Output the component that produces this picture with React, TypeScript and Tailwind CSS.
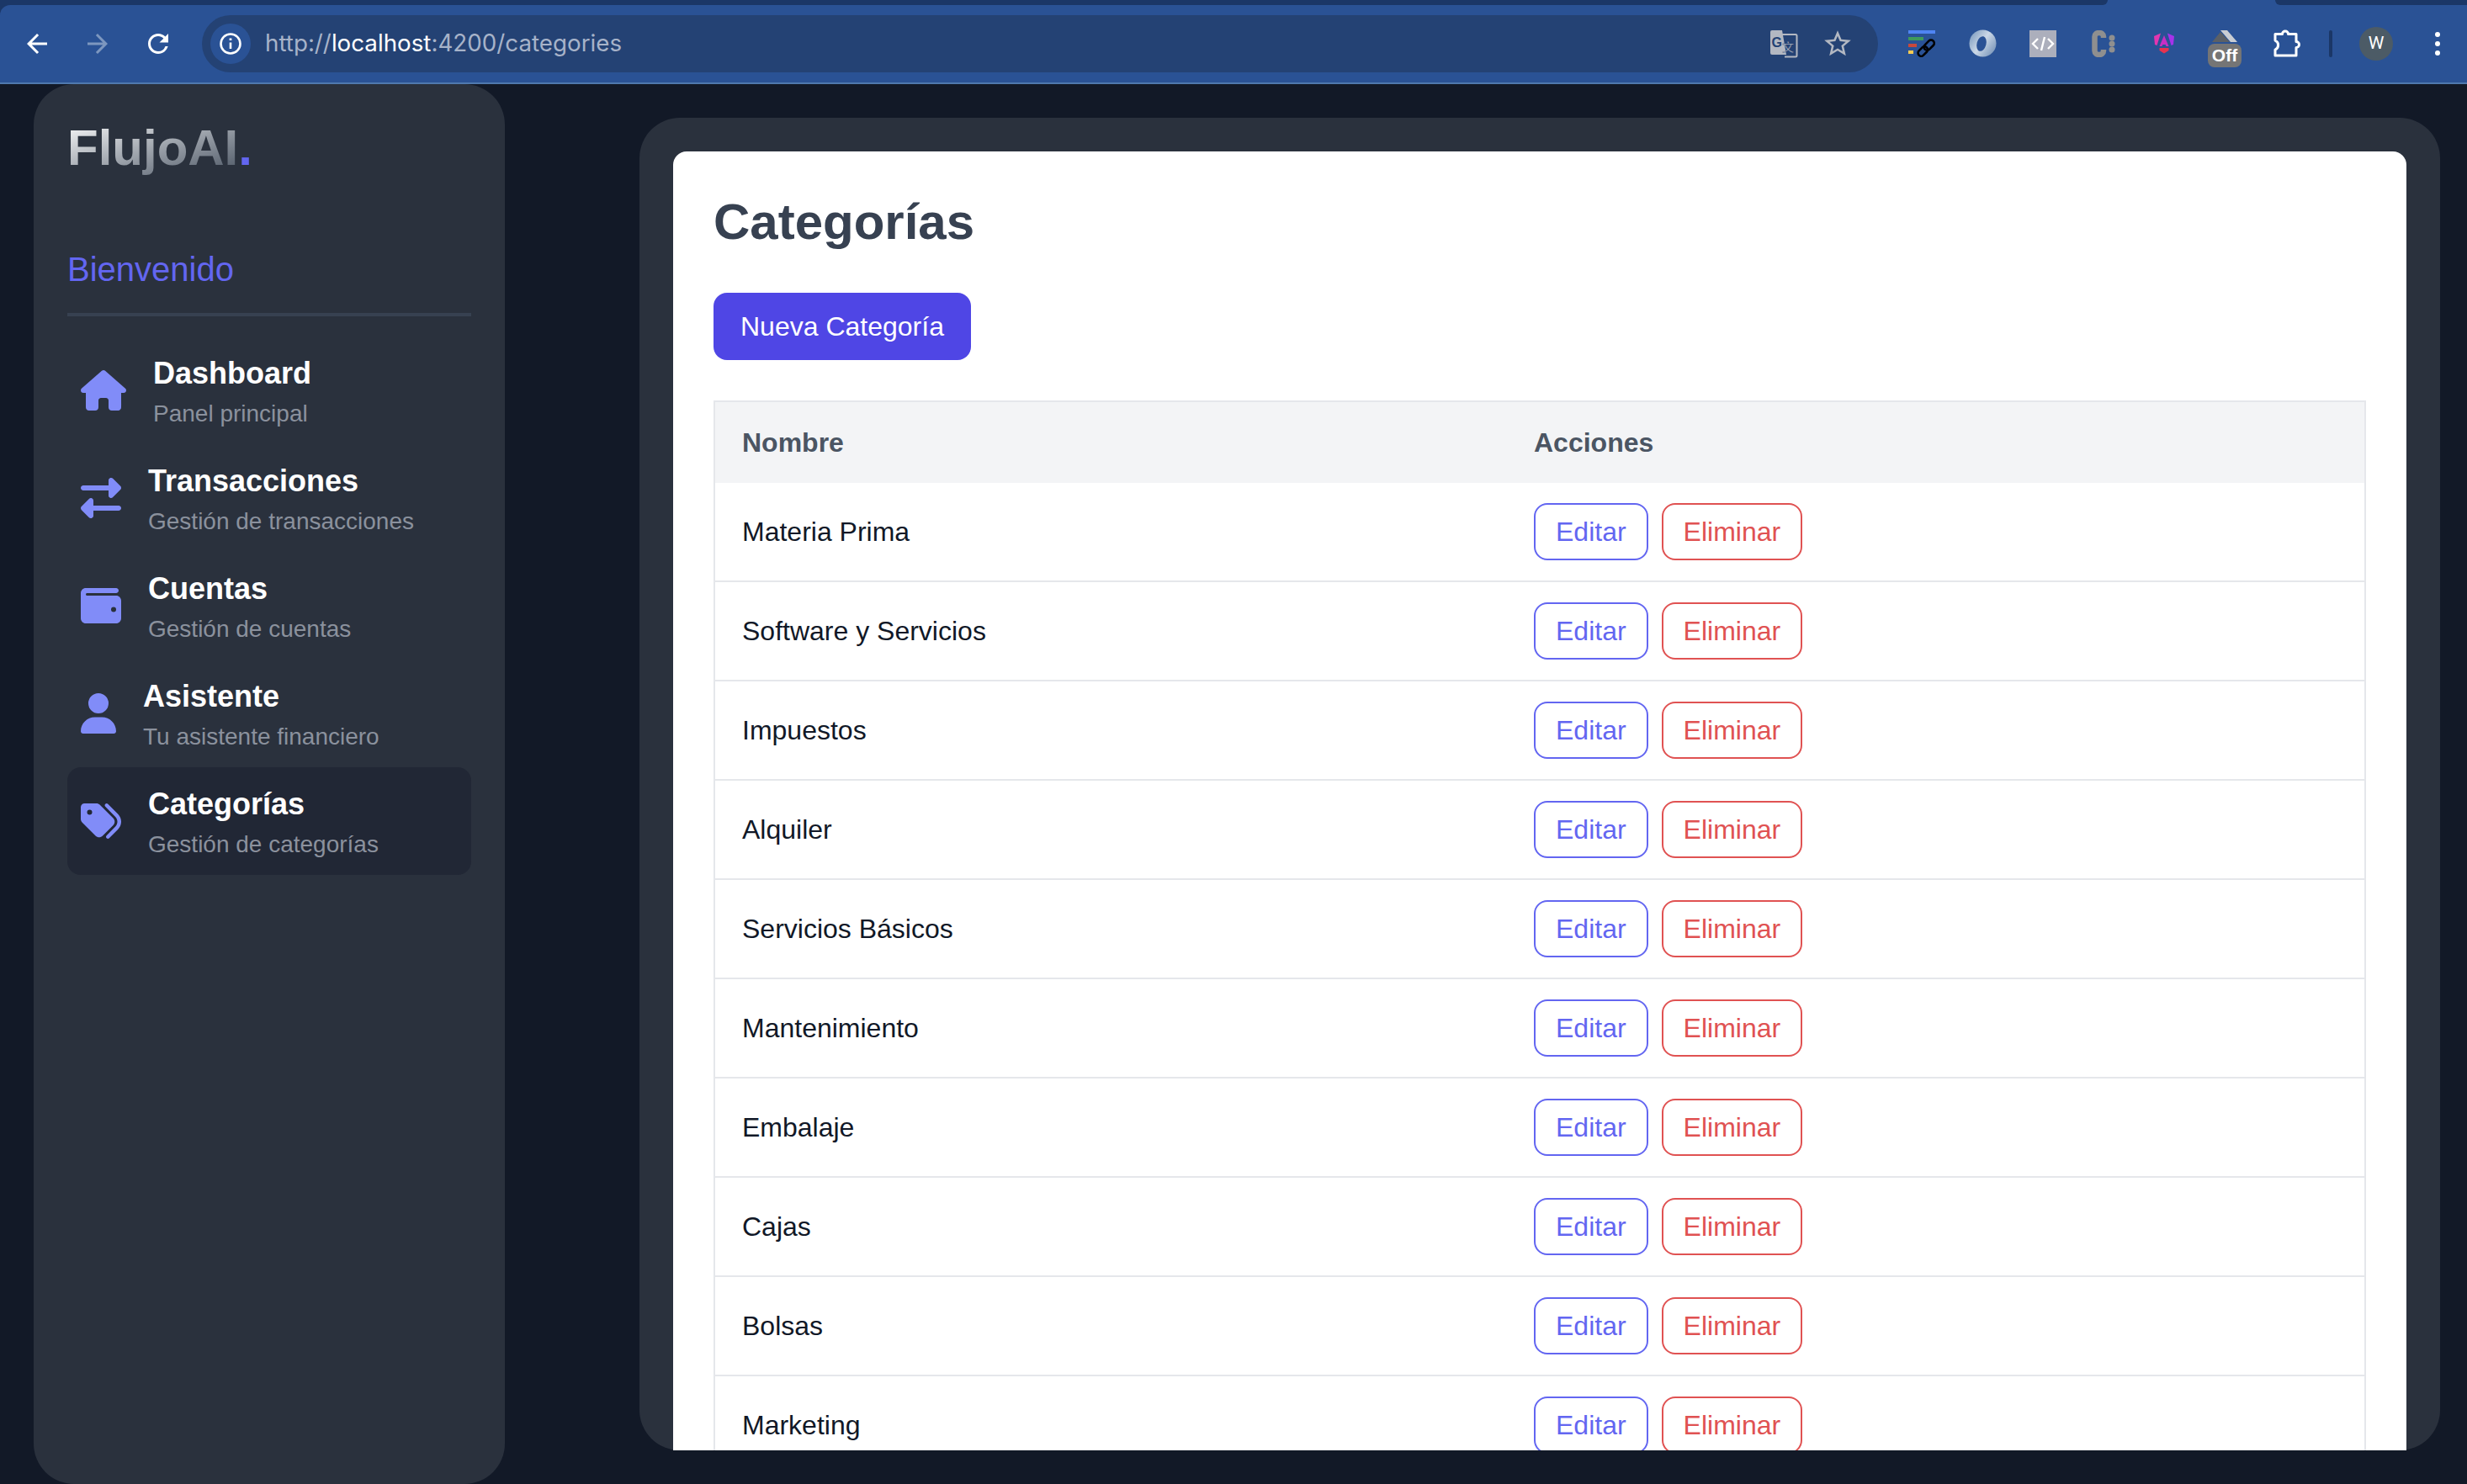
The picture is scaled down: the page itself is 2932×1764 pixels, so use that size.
import { FaHouse, FaRightLeft, FaWallet, FaUser, FaTags } from "react-icons/fa6";

const navItems = [
  { icon: FaHouse, iconSize: "h-[48px] w-[54px]", title: "Dashboard", sub: "Panel principal" },
  { icon: FaRightLeft, iconSize: "h-[48px] w-[48px]", title: "Transacciones", sub: "Gestión de transacciones" },
  { icon: FaWallet, iconSize: "h-[48px] w-[48px]", title: "Cuentas", sub: "Gestión de cuentas" },
  { icon: FaUser, iconSize: "h-[48px] w-[42px]", title: "Asistente", sub: "Tu asistente financiero" },
  { icon: FaTags, iconSize: "h-[48px] w-[48px]", title: "Categorías", sub: "Gestión de categorías", active: true },
];

const categories = [
  "Materia Prima",
  "Software y Servicios",
  "Impuestos",
  "Alquiler",
  "Servicios Básicos",
  "Mantenimiento",
  "Embalaje",
  "Cajas",
  "Bolsas",
  "Marketing",
];

function TranslateIcon() {
  return (
    <svg width="34" height="34" viewBox="0 0 34 34">
      <path d="M15 6h16a1.500 1.500 0 0 1 1.500 1.500V31a1.500 1.500 0 0 1-1.500 1.500H18" fill="#244274" stroke="#b3b8c2" strokeWidth="2" />
      <path d="M3 1h12l5 29H3a2 2 0 0 1-2-2V3a2 2 0 0 1 2-2z" fill="#b3b8c2" />
      <text x="2.500" y="21" fontSize="16" fontWeight="700" fill="#244274" fontFamily="Liberation Sans, sans-serif">G</text>
      <text x="15" y="26" fontSize="14" fill="#b3b8c2" stroke="#244274" strokeWidth="0.3" fontFamily="Noto Sans CJK SC, sans-serif">文</text>
    </svg>
  );
}

function LinkExtIcon() {
  return (
    <svg width="32" height="32" viewBox="0 0 32 32">
      <rect x="0" y="0" width="32" height="4" fill="#4f84f2" />
      <rect x="0" y="8" width="18" height="4" fill="#3f9a5c" />
      <rect x="0" y="16" width="10" height="4" fill="#c8483c" />
      <rect x="0" y="24" width="6" height="4" fill="#f6cb52" />
      <g fill="none" stroke="#000" strokeWidth="2.600" transform="rotate(-45 21 21)">
        <rect x="9" y="17.500" width="13" height="7.500" rx="3.700" />
        <rect x="19" y="17.500" width="14" height="7.500" rx="3.700" />
      </g>
    </svg>
  );
}

function RingIcon() {
  return (
    <svg width="33" height="33" viewBox="0 0 33 33">
      <defs>
        <linearGradient id="ring" x1="0" y1="0.2" x2="1" y2="0.9">
          <stop offset="0" stopColor="#7f9dc0" />
          <stop offset="0.45" stopColor="#cbd8e7" />
          <stop offset="1" stopColor="#6f8db4" />
        </linearGradient>
      </defs>
      <circle cx="16.500" cy="16.500" r="16" fill="url(#ring)" />
      <ellipse cx="15" cy="17" rx="5.500" ry="9" transform="rotate(15 15 17)" fill="#2a5295" />
    </svg>
  );
}

function CodeIcon() {
  return (
    <svg width="32" height="32" viewBox="0 0 32 32">
      <rect width="32" height="32" fill="#acafbc" />
      <path d="M10 10l-6 6 6 6M22 10l6 6-6 6M18 8l-4 16" fill="none" stroke="#fff" strokeWidth="2.400" />
    </svg>
  );
}

function CDotsIcon() {
  return (
    <svg width="28" height="32" viewBox="0 0 28 32">
      <path d="M14 9V7.500C14 1.500 3.500 1.500 3.500 7.500V24.500C3.500 30.500 14 30.500 14 24.500V23" fill="none" stroke="#8f8f8f" strokeWidth="6.500" />
      <circle cx="24" cy="9" r="3.500" fill="#8f8f8f" />
      <circle cx="24" cy="16" r="3.500" fill="#8f8f8f" />
      <circle cx="24" cy="23" r="3.500" fill="#8f8f8f" />
    </svg>
  );
}

function AngularIcon() {
  return (
    <svg width="24" height="25" viewBox="0 0 24 25">
      <path d="M0 4L8 .5 3.500 15 1 14z" fill="#e236b0" />
      <path d="M16 .5L24 4l-1 10-2.500 1z" fill="#a533ea" />
      <path d="M12 3l5.500 13h-3L13.600 14h-3.200l-.9 2h-3z" fill="#c62fc4" />
      <path d="M6.500 18h11v3L12 24.500 6.500 21z" fill="#e8334f" />
    </svg>
  );
}

function OffBadge() {
  return (
    <div className="flex w-[40px] flex-col items-center">
      <svg width="32" height="16" viewBox="0 0 32 16">
        <path d="M1 14L11 2l11 12z" fill="#5b6066" />
        <path d="M11 0h8l12 14h-8z" fill="#c9cdd3" />
      </svg>
      <div className="flex h-[28px] w-[40px] items-center justify-center rounded-[8px] bg-[#757575] font-['Liberation_Sans',sans-serif] text-[21px] leading-none font-bold text-white">
        Off
      </div>
    </div>
  );
}

function PuzzleIcon() {
  return (
    <svg width="34" height="34" viewBox="0 0 34 34">
      <path
        d="M3 5.500H11.500A3.500 3.500 0 0 1 18.500 5.500H28V14.500A3.500 3.500 0 0 1 28 21.500V31H3V24A6 6 0 0 0 3 13Z"
        fill="none"
        stroke="#fff"
        strokeWidth="3"
        strokeLinejoin="round"
      />
    </svg>
  );
}

function BrowserBar() {
  return (
    <header className="bg-[#1b3767]">
      <div className="flex h-[6px] bg-[#2a5295]">
        <div className="w-[2505px] rounded-br-[10px] bg-[#1b3767]" />
        <div className="w-[199px]" />
        <div className="flex-1 rounded-bl-[10px] bg-[#1b3767]" />
      </div>
      <div className="flex h-[92px] items-center rounded-tl-[12px] bg-[#2a5295] pb-[1px]">
        <svg className="ml-[26px]" width="36" height="36" viewBox="0 0 24 24" fill="#fff">
          <path d="M20 11H7.830l5.590-5.590L12 4l-8 8 8 8 1.410-1.410L7.830 13H20v-2z" />
        </svg>
        <svg className="ml-[36px]" width="36" height="36" viewBox="0 0 24 24" fill="#7d97bf">
          <path d="M12 4l-1.410 1.410L16.170 11H4v2h12.170l-5.580 5.590L12 20l8-8z" />
        </svg>
        <svg className="ml-[36px]" width="36" height="36" viewBox="0 0 24 24" fill="#fff">
          <path d="M17.650 6.350A7.958 7.958 0 0 0 12 4c-4.420 0-7.990 3.580-7.990 8s3.570 8 7.990 8c3.730 0 6.840-2.550 7.730-6h-2.080A5.990 5.990 0 0 1 12 18c-3.310 0-6-2.690-6-6s2.690-6 6-6c1.660 0 3.140.69 4.220 1.780L13 11h7V4l-2.350 2.350z" />
        </svg>
        <div className="ml-[34px] flex h-[68px] w-[1992px] items-center rounded-full bg-[#244274] pl-[10px] font-['Inter',sans-serif]">
          <div className="flex h-[48px] w-[48px] items-center justify-center rounded-full bg-[#2a5295]">
            <svg width="28" height="28" viewBox="0 0 28 28" fill="none" stroke="#fff">
              <circle cx="14" cy="14" r="11.500" strokeWidth="2.600" />
              <path d="M14 12.500V20" strokeWidth="2.600" />
              <path d="M14 7.500V10" strokeWidth="2.800" />
            </svg>
          </div>
          <div className="ml-[17px] text-[27.750px] text-[#a7b3c9]">
            http://<span className="text-white">localhost</span>:4200/categories
          </div>
          <div className="ml-auto mr-[29px] flex items-center">
            <TranslateIcon />
            <svg className="ml-[28px]" width="38" height="38" viewBox="0 0 24 24" fill="#b3b8c2">
              <path d="M22 9.240l-7.190-.62L12 2 9.190 8.630 2 9.240l5.460 4.730L5.820 21 12 17.270 18.180 21l-1.630-7.030L22 9.240zM12 15.400l-3.760 2.270 1-4.280-3.320-2.880 4.380-.38L12 6.100l1.710 4.040 4.380.38-3.320 2.880 1 4.280L12 15.400z" />
            </svg>
          </div>
        </div>
        <div className="ml-[36px] flex items-center">
          <LinkExtIcon />
        </div>
        <div className="ml-[40px]">
          <RingIcon />
        </div>
        <div className="ml-[39px]">
          <CodeIcon />
        </div>
        <div className="ml-[42px]">
          <CDotsIcon />
        </div>
        <div className="ml-[46px]">
          <AngularIcon />
        </div>
        <div className="ml-[40px] mt-[12px]">
          <OffBadge />
        </div>
        <div className="ml-[37px]">
          <PuzzleIcon />
        </div>
        <div className="ml-[33px] h-[32px] w-[4px] rounded-full bg-[#1b3767]" />
        <div className="ml-[32px] flex h-[40px] w-[40px] items-center justify-center rounded-full bg-[#4c5b66] font-['Roboto',sans-serif] text-[21px] text-white">
          W
        </div>
        <div className="ml-[50px] flex flex-col gap-[5px]">
          <div className="h-[6px] w-[6px] rounded-full bg-white" />
          <div className="h-[6px] w-[6px] rounded-full bg-white" />
          <div className="h-[6px] w-[6px] rounded-full bg-white" />
        </div>
      </div>
      <div className="h-[2px] bg-[#5079ae]" />
    </header>
  );
}

function Sidebar() {
  return (
    <aside className="ml-[40px] h-[1664px] w-[560px] shrink-0 rounded-[48px] bg-[#2a313d] px-[40px] pt-[40px]">
      <div className="mb-[80px] text-[60px] leading-[72px] font-bold">
        <span className="bg-linear-to-br from-white to-[#4b5563] bg-clip-text text-transparent">FlujoAI</span>
        <span className="text-[#6366f1]">.</span>
      </div>
      <div className="mb-[24px] border-b-4 border-[#374151] pb-[24px] text-[40px] leading-[56px] text-[#6366f1]">
        Bienvenido
      </div>
      <nav>
        {navItems.map((item) => (
          <div
            key={item.title}
            className={`flex h-[128px] items-center gap-[32px] rounded-[16px] px-[16px] ${item.active ? "bg-[#212735]" : ""}`}
          >
            <item.icon className={`${item.iconSize} shrink-0 text-[#818cf8]`} />
            <div>
              <div className="text-[36px] leading-[56px] font-bold text-white">{item.title}</div>
              <div className="text-[28px] leading-[40px] text-[#8b919d]">{item.sub}</div>
            </div>
          </div>
        ))}
      </nav>
    </aside>
  );
}

export default function App() {
  return (
    <div className="h-[1764px] w-[2932px] overflow-hidden bg-[#121927] font-['Liberation_Sans',Arial,sans-serif]">
      <BrowserBar />
      <div className="flex">
        <Sidebar />
        <main className="mt-[40px] ml-[160px] h-[1584px] w-[2140px] overflow-hidden">
          <div className="h-[1584px] rounded-[48px] bg-[#2a313d] px-[40px] pt-[40px]">
            <div className="rounded-[16px] bg-white p-[48px]">
              <h1 className="mb-[48px] text-[60px] leading-[72px] font-bold text-[#374151]">Categorías</h1>
              <button className="mb-[48px] block rounded-[16px] bg-[#4f46e5] px-[32px] py-[16px] text-[32px] leading-[48px] text-white">
                Nueva Categoría
              </button>
              <div className="border-2 border-[#e5e7eb]">
                <table className="w-full border-separate border-spacing-0 text-left">
                  <thead>
                    <tr className="bg-[#f3f4f6]">
                      <th className="w-[941px] px-[32px] py-[24px] text-[32px] leading-[48px] font-bold text-[#4b5563]">Nombre</th>
                      <th className="px-[32px] py-[24px] text-[32px] leading-[48px] font-bold text-[#4b5563]">Acciones</th>
                    </tr>
                  </thead>
                  <tbody>
                    {categories.map((name) => (
                      <tr key={name}>
                        <td className="border-b-2 border-[#e5e7eb] px-[32px] py-[24px] text-[32px] leading-[48px] text-[#111827]">{name}</td>
                        <td className="border-b-2 border-[#e5e7eb] px-[32px] py-[24px]">
                          <div className="flex gap-[16px]">
                            <button className="rounded-[16px] border-2 border-[#6366f1] px-[24px] py-[8px] text-[32px] leading-[48px] text-[#6366f1]">
                              Editar
                            </button>
                            <button className="rounded-[16px] border-2 border-[#e05252] px-[24px] py-[8px] text-[32px] leading-[48px] text-[#e05252]">
                              Eliminar
                            </button>
                          </div>
                        </td>
                      </tr>
                    ))}
                  </tbody>
                </table>
              </div>
            </div>
          </div>
        </main>
      </div>
    </div>
  );
}
